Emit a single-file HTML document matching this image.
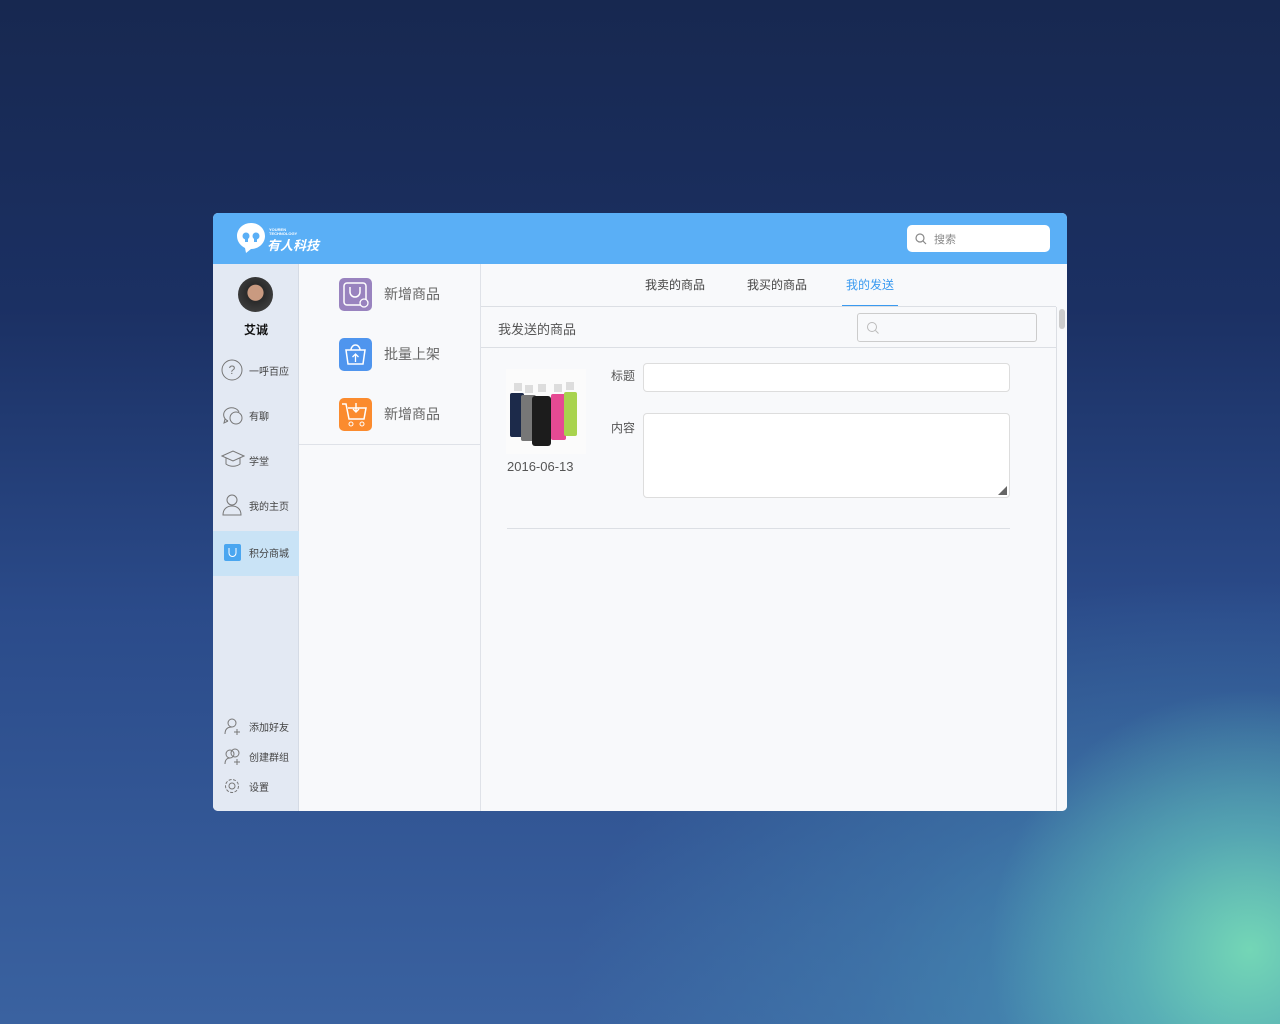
<!DOCTYPE html>
<html><head><meta charset="utf-8"><style>
*{margin:0;padding:0;box-sizing:border-box}
body{width:1280px;height:1024px;overflow:hidden;position:relative;font-family:"Liberation Sans","Noto Sans CJK SC",sans-serif;
background:radial-gradient(circle 260px at 1250px 950px,rgba(118,218,182,.95) 0%,rgba(100,195,185,.6) 45%,rgba(80,160,185,0) 100%),
radial-gradient(ellipse 650px 420px at 1220px 1000px,rgba(75,160,185,.85) 0%,rgba(70,140,180,.4) 55%,rgba(60,110,170,0) 100%),
linear-gradient(180deg,#172850 0%,#1b3063 30%,#2b4b8a 60%,#3a62a0 100%);}
.win{position:absolute;left:213px;top:213px;width:854px;height:598px;border-radius:5px;overflow:hidden;background:#f8f9fb}
.hdr{position:absolute;left:0;top:0;width:854px;height:51px;background:#5aaff6}
.search{position:absolute;left:694px;top:12px;width:143px;height:27px;background:#fff;border-radius:5px;font-size:11px;color:#888;padding:6px 0 0 27px}
.side{position:absolute;left:0;top:51px;width:86px;height:547px;background:#e3e9f3;border-right:1px solid #d5dbe5}
.mid{position:absolute;left:86px;top:51px;width:182px;height:547px;background:#f8f9fb;border-right:1px solid #dfe2e8}
.main{position:absolute;left:268px;top:51px;width:586px;height:547px;background:#f8f9fb}
.nav{position:absolute;left:0;width:86px;height:45px;font-size:10px;color:#444}
.nav span{position:absolute;left:36px;top:14px}
.nav svg{position:absolute;left:8px;top:10px}
.mi{position:absolute;left:40px;width:160px;height:34px;font-size:14px;color:#666}
.mi .ic{position:absolute;left:0;top:0;width:33px;height:33px;border-radius:5px}
.mi span{position:absolute;left:45px;top:6px}
.tab{position:absolute;top:12px;font-size:12px;color:#444}
</style></head><body>
<div class="win">
 <div class="hdr">
  <svg style="position:absolute;left:23px;top:9px" width="30" height="32" viewBox="0 0 30 32"><path d="M15 1C7 1 1 7 1 14c0 6 4 10 8 12l1 5 5-4c8 0 14-6 14-13S23 1 15 1z" fill="#fff"/><circle cx="10" cy="14" r="3.5" fill="#5aaff6"/><circle cx="20" cy="14" r="3.5" fill="#5aaff6"/><rect x="9" y="14" width="3" height="6" fill="#5aaff6"/><rect x="18" y="14" width="3" height="6" fill="#5aaff6"/></svg>
  <div style="position:absolute;left:56px;top:15px;font-size:4px;color:#fff;line-height:4px;font-weight:bold">YOUREN<br>TECHNOLOGY</div>
  <div style="position:absolute;left:54px;top:22px;font-size:13px;color:#fff;font-style:italic;font-weight:bold">有人科技</div>
  <div class="search"><svg style="position:absolute;left:8px;top:8px" width="12" height="12" viewBox="0 0 12 12"><circle cx="5" cy="5" r="4" fill="none" stroke="#888" stroke-width="1.2"/><path d="M8 8l3 3" stroke="#888" stroke-width="1.2"/></svg>搜索</div>
 </div>
 <div class="side">
  <div style="position:absolute;left:25px;top:13px;width:35px;height:35px;border-radius:50%;background:radial-gradient(circle at 50% 45%,#c99a80 0 30%,#2a2a2a 32%,#4a4a4a 100%)"></div>
  <div style="position:absolute;left:0;width:86px;top:57px;text-align:center;font-size:12px;font-weight:bold;color:#111">艾诚</div>
  <div class="nav" style="top:85px"><svg width="22" height="22"><circle cx="11" cy="11" r="10" fill="none" stroke="#777"/><text x="11" y="15" font-size="12" text-anchor="middle" fill="#777">?</text></svg><span>一呼百应</span></div>
  <div class="nav" style="top:130px"><svg width="24" height="22"><path d="M7 17a8 7 0 1 1 11-9" fill="none" stroke="#777"/><path d="M4 15l-1 4 4-2" fill="none" stroke="#777"/><circle cx="15" cy="14" r="6" fill="#e3e9f3" stroke="#777"/></svg><span>有聊</span></div>
  <div class="nav" style="top:175px"><svg width="24" height="22"><path d="M1 7l11-5 11 5-11 5z M5 9v6c4 3 10 3 14 0V9" fill="none" stroke="#777"/></svg><span>学堂</span></div>
  <div class="nav" style="top:220px"><svg width="22" height="22"><circle cx="11" cy="6" r="5" fill="none" stroke="#777"/><path d="M2 21c0-6 4-9 9-9s9 3 9 9z" fill="none" stroke="#777"/></svg><span>我的主页</span></div>
  <div class="nav" style="top:267px;background:#c9e3f6"><svg width="22" height="22" style="top:13px;left:11px"><rect x="0" y="0" width="17" height="17" rx="2" fill="#4aa6f0"/><path d="M5 4v5a3.5 3.5 0 0 0 7 0V4" fill="none" stroke="#fff"/></svg><span>积分商城</span></div>
  <div class="nav" style="top:450px;height:30px"><svg width="22" height="22" style="top:4px;left:11px"><circle cx="8" cy="5" r="4" fill="none" stroke="#777"/><path d="M1 16c0-5 3-7 7-7" fill="none" stroke="#777"/><path d="M10 14h6M13 11v6" stroke="#777"/></svg><span style="top:5px">添加好友</span></div>
  <div class="nav" style="top:480px;height:30px"><svg width="22" height="22" style="top:4px;left:11px"><circle cx="6" cy="6" r="4" fill="none" stroke="#777"/><circle cx="11" cy="5" r="4" fill="none" stroke="#777"/><path d="M1 16c0-4 2-6 5-6" fill="none" stroke="#777"/><path d="M10 14h6M13 11v6" stroke="#777"/></svg><span style="top:5px">创建群组</span></div>
  <div class="nav" style="top:510px;height:30px"><svg width="22" height="22" style="top:4px;left:11px"><circle cx="8" cy="8" r="6.5" fill="none" stroke="#777" stroke-dasharray="3 1.5"/><circle cx="8" cy="8" r="3" fill="none" stroke="#777"/></svg><span style="top:5px">设置</span></div>
 </div>
 <div class="mid">
  <div class="mi" style="top:14px"><div class="ic" style="background:#9983bf"><svg width="33" height="33"><rect x="5" y="5" width="22" height="22" rx="3" fill="none" stroke="#fff" stroke-width="1.5"/><path d="M11 9v5a5 5 0 0 0 10 0V9" fill="none" stroke="#fff" stroke-width="1.5"/><circle cx="25" cy="25" r="4" fill="#9983bf" stroke="#fff" stroke-width="1.3"/></svg></div><span>新增商品</span></div>
  <div class="mi" style="top:74px"><div class="ic" style="background:#4f95ee"><svg width="33" height="33"><path d="M7 12h19l-2 14H9z" fill="none" stroke="#fff" stroke-width="1.5"/><path d="M12 12a4.5 5 0 0 1 9 0" fill="none" stroke="#fff" stroke-width="1.5"/><path d="M16.5 24v-7M13.5 19l3-3 3 3" fill="none" stroke="#fff" stroke-width="1.3"/></svg></div><span>批量上架</span></div>
  <div class="mi" style="top:134px"><div class="ic" style="background:#fb8b2e"><svg width="33" height="33"><path d="M3 6h4l3 15h15l2-11H9" fill="none" stroke="#fff" stroke-width="1.5"/><circle cx="12" cy="26" r="2" fill="none" stroke="#fff"/><circle cx="23" cy="26" r="2" fill="none" stroke="#fff"/><path d="M17 5v9M14 11l3 3 3-3" fill="none" stroke="#fff" stroke-width="1.4"/></svg></div><span>新增商品</span></div>
  <div style="position:absolute;left:0;top:180px;width:182px;height:1px;background:#dfe2e8"></div>
 </div>
 <div class="main">
  <div class="tab" style="left:164px">我卖的商品</div>
  <div class="tab" style="left:266px">我买的商品</div>
  <div class="tab" style="left:365px;color:#3a9af0">我的发送</div>
  <div style="position:absolute;left:361px;top:41px;width:56px;height:2px;background:#3a9af0"></div>
  <div style="position:absolute;left:0;top:42px;width:575px;height:1px;background:#dcdfe4"></div>
  <div style="position:absolute;left:17px;top:55px;font-size:13px;color:#555">我发送的商品</div>
  <div style="position:absolute;left:376px;top:49px;width:180px;height:29px;border:1px solid #ccc;border-radius:3px;background:#f8f9fb"><svg style="position:absolute;left:8px;top:7px" width="14" height="14"><circle cx="6" cy="6" r="4.5" fill="none" stroke="#bbb"/><path d="M9.5 9.5l3 3" stroke="#bbb"/></svg></div>
  <div style="position:absolute;left:0;top:83px;width:575px;height:1px;background:#dcdfe4"></div>
  <div style="position:absolute;left:575px;top:43px;width:1px;height:504px;background:#dcdfe4"></div>
  <div style="position:absolute;left:578px;top:45px;width:6px;height:20px;border-radius:3px;background:#ccc"></div>
  <svg style="position:absolute;left:25px;top:105px" width="80" height="85" viewBox="0 0 80 85">
   <rect width="80" height="85" fill="#fbfbfb"/>
   <g><rect x="4" y="24" width="14" height="44" rx="2" fill="#1c2a4a"/><rect x="15" y="26" width="15" height="46" rx="2" fill="#777"/><rect x="45" y="25" width="15" height="46" rx="2" fill="#e64a93"/><rect x="58" y="23" width="13" height="44" rx="2" fill="#a8d34e"/><rect x="26" y="27" width="19" height="50" rx="3" fill="#1c1c1c"/>
   <rect x="8" y="14" width="8" height="8" fill="#ddd"/><rect x="19" y="16" width="8" height="8" fill="#ddd"/><rect x="32" y="15" width="8" height="8" fill="#ddd"/><rect x="48" y="15" width="8" height="8" fill="#ddd"/><rect x="60" y="13" width="8" height="8" fill="#ddd"/></g></svg>
  <div style="position:absolute;left:26px;top:195px;font-size:13px;color:#555">2016-06-13</div>
  <div style="position:absolute;left:130px;top:103px;font-size:12px;color:#555">标题</div>
  <div style="position:absolute;left:162px;top:99px;width:367px;height:29px;border:1px solid #ddd;border-radius:4px;background:#fff"></div>
  <div style="position:absolute;left:130px;top:155px;font-size:12px;color:#555">内容</div>
  <div style="position:absolute;left:162px;top:149px;width:367px;height:85px;border:1px solid #ddd;border-radius:4px;background:#fff"><svg style="position:absolute;right:2px;bottom:2px" width="9" height="9"><path d="M9 0V9H0z" fill="#666"/></svg></div>
  <div style="position:absolute;left:26px;top:264px;width:503px;height:1px;background:#dcdfe4"></div>
 </div>
</div>
</body></html>
